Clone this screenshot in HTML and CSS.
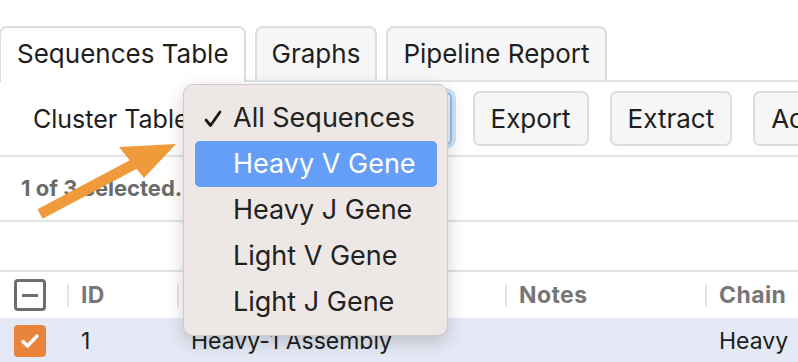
FILE: index.html
```html
<!DOCTYPE html>
<html lang="en">
<head>
    <meta charset="UTF-8">
    <title>Sequences Table</title>
    <link rel="stylesheet" href="styles.css">
</head>
<body>
    <div class="page">
        <nav class="tabs">
            <div class="tab active">Sequences Table</div>
            <div class="tab">Graphs</div>
            <div class="tab">Pipeline Report</div>
        </nav>

        <div class="toolbar">
            <span class="label">Cluster Table</span>
            <div class="select">All Sequences</div>
            <button class="btn">Export</button>
            <button class="btn">Extract</button>
            <button class="btn">Add to Collection</button>
        </div>

        <div class="status">1 of 3 selected.</div>
        <div class="spacer"></div>

        <div class="table">
            <div class="thead">
                <div class="cell check"><span class="box minus"></span></div>
                <div class="cell"><span class="sep"></span>ID</div>
                <div class="cell"><span class="sep"></span></div>
                <div class="cell"><span class="sep"></span>Notes</div>
                <div class="cell"><span class="sep"></span>Chain</div>
            </div>
            <div class="trow selected">
                <div class="cell check">
                    <span class="box checked">
                        <svg width="22" height="22" viewBox="0 0 22 22"><path d="M4 11.5l4.5 4.5L18 6" fill="none" stroke="#fff" stroke-width="3.4" stroke-linecap="round" stroke-linejoin="round"/></svg>
                    </span>
                </div>
                <div class="cell">1</div>
                <div class="cell">Heavy-1 Assembly</div>
                <div class="cell"></div>
                <div class="cell">Heavy</div>
            </div>
        </div>

        <!-- открытое меню выбора -->
        <ul class="menu">
            <li>
                <svg class="tick" width="18" height="18" viewBox="0 0 18 18"><path d="M2 10l4.5 5.5L16 2" fill="none" stroke="#1a1a1a" stroke-width="2.8" stroke-linecap="round" stroke-linejoin="round"/></svg>
                All Sequences
            </li>
            <li class="hover">Heavy V Gene</li>
            <li>Heavy J Gene</li>
            <li>Light V Gene</li>
            <li>Light J Gene</li>
        </ul>

        <!-- стрелка-подсказка -->
        <svg class="arrow" width="200" height="240" viewBox="0 0 200 240">
            <line x1="40" y1="214" x2="138" y2="162" stroke="#f19a3b" stroke-width="11"/>
            <polygon points="119,147 176,144 144,178" fill="#f19a3b"/>
        </svg>
    </div>
</body>
</html>
```

FILE: styles.css
```css
/* Основные стили */
body {
    margin: 0;
    background: #fff;
    font-family: Inter, "Liberation Sans", sans-serif;
    color: #1e1e20;
    overflow: hidden;
}

.page {
    position: relative;
    width: 798px;
    height: 362px;
    overflow: hidden;
}

/* Вкладки */
.tabs {
    display: flex;
    gap: 9px;
    padding-top: 26px;
    border-bottom: 2px solid #e2e3e6;
}

.tab {
    height: 52px;
    line-height: 52px;
    padding: 0 15px;
    font-size: 26px;
    background: #f6f6f7;
    border: 2px solid #dcdde1;
    border-bottom: none;
    border-radius: 8px 8px 0 0;
    white-space: nowrap;
}

.tab.active {
    background: #fff;
    margin-left: -1px;
    margin-bottom: -2px;
    height: 54px;
    padding: 0 15px 0 16px;
}

/* Панель инструментов */
.toolbar {
    display: flex;
    align-items: center;
    gap: 21px;
    height: 73px;
    padding-left: 33px;
    border-bottom: 2px solid #e2e3e6;
    white-space: nowrap;
}

.toolbar > * {
    flex-shrink: 0;
}

.label {
    font-size: 25px;
    margin-right: -12px;
}

.select {
    width: 254px;
    height: 53px;
    border: 2px solid #8fbdf0;
    border-radius: 6px;
    box-shadow: 0 0 0 4px rgba(120, 175, 235, 0.35);
    background: #f6f6f7;
    font-size: 25px;
    line-height: 51px;
    padding-left: 10px;
    box-sizing: border-box;
}

.btn {
    height: 55px;
    padding: 0 16px;
    font-family: inherit;
    font-size: 26px;
    color: #1e1e20;
    background: #f6f6f7;
    border: 2px solid #dcdde1;
    border-radius: 7px;
}

.status {
    height: 63px;
    line-height: 63px;
    padding-left: 21px;
    font-size: 22px;
    font-weight: 700;
    color: #6b6b6b;
    border-bottom: 2px solid #e2e3e6;
}

.spacer {
    height: 48px;
    border-bottom: 2px solid #e2e3e6;
}

/* Таблица */
.thead, .trow {
    display: grid;
    grid-template-columns: 67px 110px 328px 200px 1fr;
}

.thead {
    height: 46px;
    font-size: 23px;
    font-weight: 700;
    letter-spacing: 0.4px;
    color: #777;
}

.trow {
    height: 46px;
    font-size: 23px;
}

.trow.selected {
    background: #e4e9f5;
}

.cell {
    display: flex;
    align-items: center;
    padding-left: 14px;
    white-space: nowrap;
}

.thead .cell {
    position: relative;
}

.sep {
    position: absolute;
    left: 0;
    top: 12px;
    width: 2px;
    height: 23px;
    background: #e6e6e8;
}

.box {
    width: 32px;
    height: 32px;
    box-sizing: border-box;
    border-radius: 4px;
    display: flex;
    align-items: center;
    justify-content: center;
}

.box.minus {
    border: 3px solid #6e6e6e;
}

.box.minus::after {
    content: "";
    width: 16px;
    height: 3px;
    background: #6e6e6e;
}

.box.checked {
    background: #e8843c;
}

/* Выпадающее меню */
.menu {
    position: absolute;
    left: 183px;
    top: 84px;
    width: 265px;
    margin: 0;
    padding: 10px 10px 10px 11px;
    box-sizing: border-box;
    list-style: none;
    background: #ede8e6;
    border: 1px solid #cfcac8;
    border-radius: 10px;
    box-shadow: 0 6px 18px rgba(0, 0, 0, 0.18);
}

.menu li {
    position: relative;
    height: 46px;
    line-height: 46px;
    padding-left: 38px;
    font-size: 27px;
    color: #222;
    border-radius: 5px;
    white-space: nowrap;
}

.menu li.hover {
    background: #649ef7;
    color: #fff;
}

.tick {
    position: absolute;
    left: 9px;
    top: 15px;
}

.arrow {
    position: absolute;
    left: 0;
    top: 0;
}
```
